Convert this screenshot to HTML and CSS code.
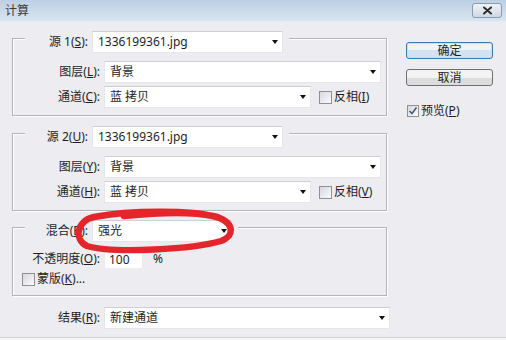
FILE: index.html
```html
<!DOCTYPE html>
<html lang="zh-CN">
<head>
<meta charset="UTF-8" />
<title>计算</title>
<link rel="stylesheet" href="styles.css">
</head>
<body>

<div class="dialog">

  <!-- Title bar -->
  <div class="titlebar">
    <span class="title">计算</span>
    <button class="close" aria-label="关闭">
      <svg width="11" height="9" viewBox="0 0 11 9"><path d="M2 1.5 L9 7.5 M9 1.5 L2 7.5" stroke="#2b2b2b" stroke-width="2" stroke-linecap="round"/></svg>
    </button>
  </div>

  <div class="content">
    <div class="main">

      <!-- Source 1 -->
      <div class="group">
        <div class="head">
          <span class="lbl lbl-head">源 1(<u>S</u>):</span>
          <div class="combo w-src"><span>1336199361.jpg</span><i class="arrow"></i></div>
        </div>
        <div class="row r1">
          <span class="lbl">图层(<u>L</u>):</span>
          <div class="combo w-layer"><span>背景</span><i class="arrow"></i></div>
        </div>
        <div class="row r2">
          <span class="lbl">通道(<u>C</u>):</span>
          <div class="combo w-chan"><span>蓝 拷贝</span><i class="arrow"></i></div>
          <i class="chk chk-inv"></i><span class="chk-text">反相(<u>I</u>)</span>
        </div>
      </div>

      <!-- Source 2 -->
      <div class="group">
        <div class="head">
          <span class="lbl lbl-head">源 2(<u>U</u>):</span>
          <div class="combo w-src"><span>1336199361.jpg</span><i class="arrow"></i></div>
        </div>
        <div class="row r1">
          <span class="lbl">图层(<u>Y</u>):</span>
          <div class="combo w-layer"><span>背景</span><i class="arrow"></i></div>
        </div>
        <div class="row r2">
          <span class="lbl">通道(<u>H</u>):</span>
          <div class="combo w-chan"><span>蓝 拷贝</span><i class="arrow"></i></div>
          <i class="chk chk-inv"></i><span class="chk-text">反相(<u>V</u>)</span>
        </div>
      </div>

      <!-- Blending -->
      <div class="group group-blend">
        <div class="head">
          <span class="lbl lbl-head">混合(<u>B</u>):</span>
          <div class="combo w-blend"><span>强光</span><i class="arrow"></i></div>
        </div>
        <div class="row row-opacity">
          <span class="lbl">不透明度(<u>O</u>):</span>
          <div class="field">100</div>
          <span class="pct">%</span>
        </div>
        <div class="row row-mask">
          <i class="chk"></i><span class="chk-text">蒙版(<u>K</u>)...</span>
        </div>
      </div>

      <div class="row row-result">
        <span class="lbl lbl-result">结果(<u>R</u>):</span>
        <div class="combo w-result"><span>新建通道</span><i class="arrow"></i></div>
      </div>

    </div>

    <!-- Buttons -->
    <div class="side">
      <button class="btn btn-default">确定</button>
      <button class="btn btn-cancel">取消</button>
      <div class="preview">
        <i class="chk chk-on">
          <svg width="10" height="10" viewBox="0 0 10 10"><path d="M1.5 5 L4 7.5 L8.5 1.5" fill="none" stroke="#4a5a78" stroke-width="1.6"/></svg>
        </i>
        <span class="chk-text">预览(<u>P</u>)</span>
      </div>
    </div>
  </div>

  <!-- hand-drawn red mark over the blend mode -->
  <svg class="mark" width="172" height="48" viewBox="0 0 172 48">
    <path d="M148 11 C125 4 62 4 26 11 C8 15 6 34 19 40 C46 48 126 43 153 35 C168 29 166 15 145 10 C121 5 86 7 56 10"
          fill="none" stroke="#e3262b" stroke-width="6.5" stroke-linecap="round"/>
  </svg>

</div>

</body>
</html>
```

FILE: styles.css
```css
/* Base */
body {
  margin: 0;
  font-family: "Noto Sans", "Noto Sans CJK SC", sans-serif;
  font-size: 12px;
  line-height: 16px;
  color: #1e1e1e;
  background: #f4f4f6;
}
u {
  text-underline-offset: 1px;
}
.dialog {
  position: relative;
  width: 506px;
  height: 337px;
  background: #edecf0;
  border-bottom: 1px solid #d2d1d6;
}

/* Title bar */
.titlebar {
  height: 22px;
  box-sizing: border-box;
  padding: 0 4px 0 5px;
  display: flex;
  align-items: center;
  justify-content: space-between;
  background: linear-gradient(#bdd0e3, #d9e5f0);
  border-bottom: 1px solid #e4ebf2;
}
.title {
  color: #3b3b3b;
}
.close {
  width: 30px;
  height: 15px;
  margin-top: -1px;
  padding: 0;
  display: flex;
  align-items: center;
  justify-content: center;
  border: 1px solid #8d9bb0;
  border-radius: 3px;
  background: linear-gradient(#eef2f7, #cfd9e4);
}

/* Layout */
.content {
  display: flex;
  padding: 16px 0 0 12px;
}
.main {
  width: 380px;
  flex: none;
}
.side {
  width: 87px;
  margin: 4px 0 0 14px;
  display: flex;
  flex-direction: column;
}

/* Group boxes */
.group {
  width: 375px;
  box-sizing: border-box;
  border: 1px solid #b4b3b8;
  box-shadow: 1px 1px 0 #fff, inset 1px 1px 0 #fff;
  padding-bottom: 7px;
}
.group + .group {
  margin-top: 17px;
}
.group-blend {
  margin-top: 16px !important;
  padding-bottom: 8px;
}
.head {
  display: flex;
  align-items: center;
  width: max-content;
  height: 22px;
  margin: -8px 0 0 12px;
  padding-right: 6px;
  background: #edecf0;
}
.row {
  display: flex;
  align-items: center;
  height: 22px;
}
.r1 { margin-top: 8px; }
.r2 { margin-top: 3px; }

.lbl {
  flex: none;
  width: 87px;
  text-align: right;
  white-space: nowrap;
}
.lbl-head { width: 63px; }
.lbl-result { width: 88px; }

/* Combo boxes */
.combo {
  flex: none;
  height: 22px;
  box-sizing: border-box;
  margin-left: 4px;
  padding: 0 4px 0 5px;
  display: flex;
  align-items: center;
  justify-content: space-between;
  background: #fff;
  border: 1px solid #e6e5ea;
  border-top-color: #cfced4;
}
.arrow {
  width: 0;
  height: 0;
  border-left: 3.5px solid transparent;
  border-right: 3.5px solid transparent;
  border-top: 4px solid #111;
}
.w-src { width: 191px; }
.w-layer { width: 277px; }
.w-chan { width: 207px; }
.w-blend { width: 140px; }
.w-result { width: 286px; }

/* Checkboxes */
.chk {
  flex: none;
  width: 13px;
  height: 13px;
  box-sizing: border-box;
  border: 1px solid #8f8f94;
  background: linear-gradient(135deg, #d8d8dc, #fbfbfc);
  display: flex;
  align-items: center;
  justify-content: center;
}
.chk-inv { margin-left: 8px; }
.chk-text {
  margin-left: 2px;
  white-space: nowrap;
}

/* Blend group rows */
.row-opacity {
  height: 18px;
  margin-top: 8px;
}
.field {
  width: 37px;
  height: 17px;
  margin-left: 5px;
  padding-left: 4px;
  box-sizing: border-box;
  background: #fff;
  line-height: 17px;
}
.pct { margin-left: 11px; }
.row-mask {
  height: 16px;
  margin-top: 3px;
  padding-left: 9px;
}
.row-result {
  margin-top: 11px;
}

/* Buttons */
.btn {
  width: 87px;
  height: 17px;
  padding: 0;
  font: inherit;
  line-height: 14px;
  color: #1e1e1e;
  border: 1px solid #707070;
  border-radius: 3px;
  background: linear-gradient(#f3f3f3 50%, #dcdcdc 50%);
}
.btn-default {
  border-color: #3d7bad;
  background: linear-gradient(#edf4f9 50%, #d3e2ee 50%);
  box-shadow: inset 0 0 0 1px #c4e0f3;
}
.btn-cancel {
  margin-top: 10px;
}
.preview {
  display: flex;
  align-items: center;
  margin-top: 17px;
  padding-left: 1px;
}
.chk-on { width: 12px; height: 12px; }

/* Red marker drawn over the screenshot */
.mark {
  position: absolute;
  left: 68px;
  top: 206px;
  pointer-events: none;
}
```
